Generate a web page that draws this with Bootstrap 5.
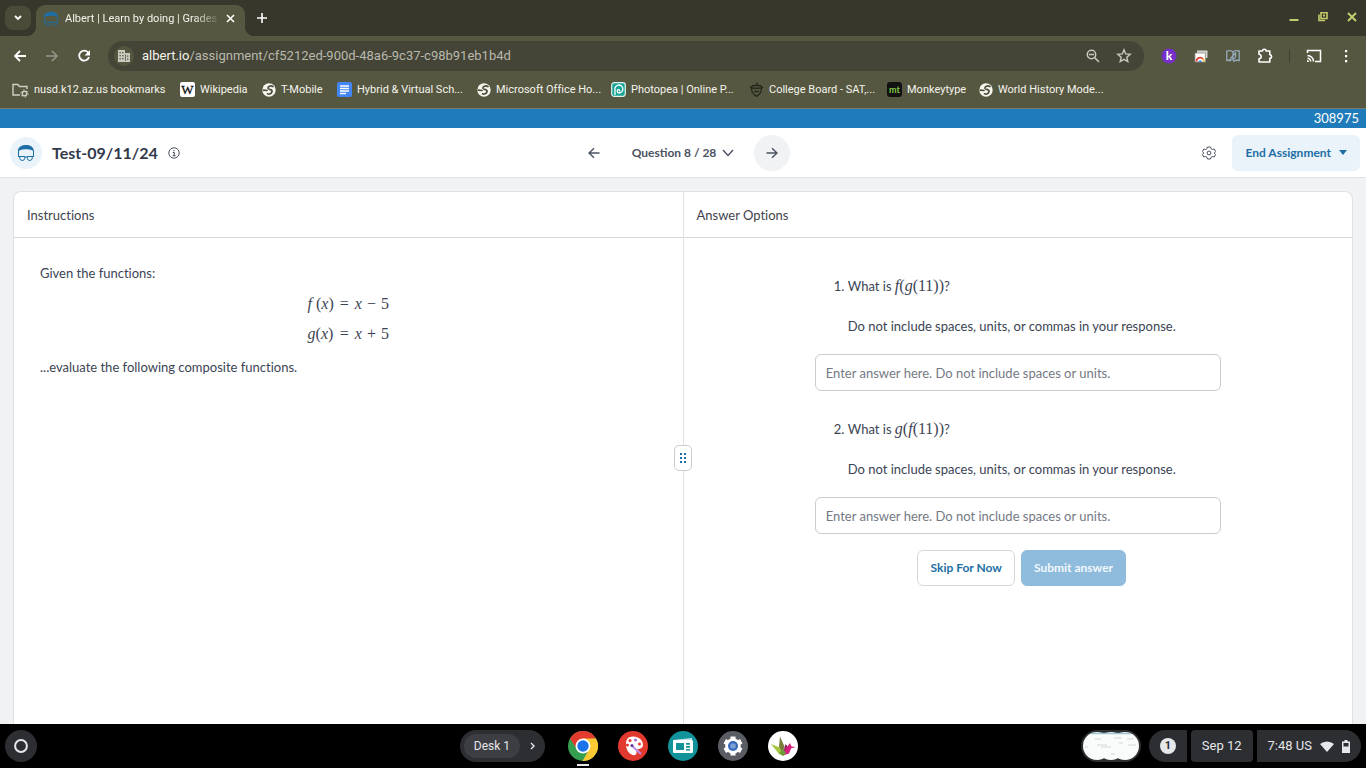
<!DOCTYPE html>
<html lang="en">
<head>
<meta charset="utf-8">
<meta name="viewport" content="width=device-width, initial-scale=1">
<title>Albert | Learn by doing</title>
<link href="https://cdn.jsdelivr.net/npm/bootstrap@5.3.0/dist/css/bootstrap.min.css" rel="stylesheet">
<style>
:root{--frame:#38372b;--tool:#565741;--omni:#444437;--ink:#3c4454;--brand:#1d6fa5;--line:#d5d7da}
body{font-family:Lato,"Liberation Sans",sans-serif;font-size:13px;line-height:20px;font-variant-ligatures:none;color:var(--ink);background:#f1f2f4}
svg{display:block;flex:none}
button{border:0;background:none;padding:0;color:inherit}
.chrome{font-family:Roboto,"Liberation Sans",sans-serif;background:var(--tool);color:#f4f4ec;border-bottom:1px solid #777d6d}
.tabstrip{height:36px;background:var(--frame);padding-left:5px}
.tabsearch{width:26px;height:24px;border-radius:8px;background:#4b4b39}
.browsertab{position:relative;width:209px;height:31px;margin-left:5px;margin-right:11px;padding:0 10px 4px 7px;border-radius:9px 9px 0 0;background:var(--tool);font-size:11px}
.browsertab::before,.browsertab::after{content:"";position:absolute;bottom:0;width:9px;height:9px}
.browsertab::before{left:-9px;background:radial-gradient(circle at 0 0,transparent 9px,var(--tool) 9px)}
.browsertab::after{right:-9px;background:radial-gradient(circle at 100% 0,transparent 9px,var(--tool) 9px)}
.tabtitle{margin-left:6px;-webkit-mask-image:linear-gradient(90deg,#000 85%,rgba(0,0,0,.15))}
.winctl{color:#c3cd6b;gap:17px;padding-right:8px}
.toolbar{height:40px;padding:0 12px}
.tools{gap:16px}
.divider{width:1px;height:14px;background:#3f4031}
.omni{height:30px;border-radius:15px;background:var(--omni);padding:0 12px 0 6px;margin:0 17px 0 16px;font-size:13px}
.siteinfo{width:20px;height:20px;border-radius:50%;background:#55563f}
.urlrest{color:#b9b9ad}
.marks{display:grid;grid-template-columns:168px 82px 75px 140px 134px 138px 138px 92px 160px;height:32px;padding:0 12px 5px;font-size:11px}
.marks a{color:inherit;text-decoration:none;gap:5px;white-space:nowrap}
.idbar{height:19px;line-height:19px;background:#1f7bb9;color:#fff;font-size:13px;padding-right:7px}
.apphead{height:50px;background:#fff;border-bottom:1px solid #dfe1e4;display:grid;grid-template-columns:1fr auto 1fr;padding:0 6px}
.logo{width:32px;height:32px;border-radius:50%;background:#e9f3f9}
.testname{font-size:16px;line-height:24px;font-weight:700;color:#33394b;margin:0 10px}
.roundbtn{width:36px;height:36px;border-radius:50%}
.roundbtn.lit{background:#f1f2f4}
.counter{font-size:12px;font-weight:700;gap:6px;color:#4b5262}
.stepper{gap:20px}
.endbtn{height:36px;border-radius:6px;background:#e9f3f9;color:var(--brand);font-size:12px;font-weight:700;padding:0 13px}
.stage{background:#f1f2f4;padding:13px 13px 0}
.panes{position:relative;background:#fff;border:1px solid #dfe1e4;border-bottom:0;border-radius:8px 8px 0 0}
.pane{flex:1 1 0}
.pane + .pane{border-left:1px solid #dfe1e4}
.panehead{height:46px;padding:0 13px;border-bottom:1px solid var(--line);color:#3f434c}
.grip{position:absolute;left:50%;top:266px;transform:translate(-50%,-50%);width:18px;height:26px;border:1px solid #c9ccd1;border-radius:5px;background:#fff}
.prompt{padding:25px 26px 0}
.eqn,.tex{font-family:"Liberation Serif",serif;font-size:16px}
.tex{line-height:1}
.eqn{line-height:30px;margin-top:6px}
.eqn td{padding:0}
.rel{margin:0 6px}
.bin{margin:0 5px}
.answers{padding-top:14px}
.ask{width:406px;max-width:100%}
.ask ol{padding-left:33px;margin:0}
.ask li{line-height:20px}
.ask li p{margin:20px 0 18px}
.answer{height:37px;padding:0 10px;font-size:13px;color:var(--ink);border-color:#c9ccd1;border-radius:6px}
.answer::placeholder{color:#747984;opacity:1}
.act{height:36px;border-radius:6px;font-size:12px;font-weight:700;padding:0 12px;border:1px solid var(--line);color:var(--brand);background:#fff}
.act:disabled{background:#8fbcdc;border-color:#8fbcdc;color:#f2f8fc;opacity:1}
.actions{gap:6px}
.shelf{height:44px;background:#000;color:#e6e7ea;font-family:Roboto,"Liberation Sans",sans-serif;display:grid;grid-template-columns:1fr auto 1fr;padding:0 5px}
.pill{height:32px;background:#2d2e32;padding:0 11px}
.launcher{width:32px;height:32px;border-radius:50%;background:#2d2e32}
.desks{height:32px;border-radius:16px;background:#2d2e32;padding:0 4px;gap:5px;margin-right:23px;font-size:12px}
.deskname{height:24px;border-radius:12px;background:#3d3e43;padding:0 10px}
.apps{gap:20px}
.running{position:relative}
.running::after{content:"";position:absolute;left:9px;right:9px;bottom:-5px;height:2px;background:#e6e7ea}
.tray{gap:4px}
.clock{gap:8px}
.tally{width:16px;height:16px;border-radius:50%;background:#e6e7ea;color:#2d2e32;font-size:11px;line-height:16px;font-weight:700}
</style>
</head>
<body class="vh-100 d-flex flex-column overflow-hidden">
<svg width="0" height="0" class="position-absolute" aria-hidden="true">
<symbol id="albert" viewBox="0 0 18 18"><path fill="#1d6fa5" d="M1 7.500C.5 4 4 1 8 1c5-.6 9 2 9 6.500l-2-1.300C12 5 6 5 3 6.200z"/><path fill="none" stroke="#1d6fa5" d="M1.500 7v6M16.500 7v6M1.500 12.500h6.200v2q-.3 2-2.500 2-2 0-2.400-2v-2M16.500 12.500h-6.200v2q.3 2 2.500 2 2 0 2.400-2v-2M7.700 13h2.600"/></symbol>
<symbol id="globe" viewBox="0 0 14 14"><circle cx="7" cy="7" r="6.700" fill="#f7f7f0"/><path fill="none" stroke="#4c4d39" stroke-width="1.700" stroke-linecap="round" d="M11 3.600C8.500 2 5.500 3.500 6 5.500c.5 1.200 4.500.5 4 3-.4 2-2.500 3-4.500 2.300M1.500 7.200l3.500.3"/></symbol>
</svg>

<header class="chrome">
 <div class="tabstrip d-flex align-items-center">
  <button class="tabsearch d-flex align-items-center justify-content-center" aria-label="Search tabs"><svg width="8" height="6" viewBox="0 0 8 6"><path d="M1 1l3 3 3-3" fill="none" stroke="#fff" stroke-width="1.800"/></svg></button>
  <div class="browsertab d-flex align-items-center align-self-end">
   <svg width="16" height="16"><use href="#albert"/></svg>
   <span class="tabtitle text-nowrap">Albert | Learn by doing | Grades</span>
   <button class="ms-auto" aria-label="Close tab"><svg width="9" height="9" viewBox="0 0 9 9"><path d="M1 1l7 7M8 1L1 8" stroke="#fff" stroke-width="1.600"/></svg></button>
  </div>
  <button aria-label="New tab"><svg width="12" height="12" viewBox="0 0 12 12"><path d="M6 1v10M1 6h10" stroke="#fff" stroke-width="1.600"/></svg></button>
  <div class="winctl ms-auto d-flex align-items-center">
   <button aria-label="Minimize"><svg width="12" height="12" viewBox="0 0 12 12"><path d="M1.500 8h9" stroke="currentColor" stroke-width="2"/></svg></button>
   <button aria-label="Restore"><svg width="12" height="12" viewBox="0 0 12 12"><path d="M4 .8h6V6.500H4zM2 2.500v6h6" fill="none" stroke="currentColor" stroke-width="1.600"/><path d="M6 2.500h2v2H6z" fill="currentColor"/></svg></button>
   <button aria-label="Close"><svg width="12" height="12" viewBox="0 0 12 12"><path d="M2 1l8 8M10 1l-8 8" stroke="currentColor" stroke-width="2"/></svg></button>
  </div>
 </div>
 <div class="toolbar d-flex align-items-center">
  <div class="tools d-flex">
   <button aria-label="Back"><svg width="16" height="16" viewBox="0 0 16 16"><path d="M14 8H3m5-5L3 8l5 5" fill="none" stroke="#fff" stroke-width="1.800"/></svg></button>
   <button aria-label="Forward"><svg width="16" height="16" viewBox="0 0 16 16"><path d="M2 8h11M8 3l5 5-5 5" fill="none" stroke="#96978a" stroke-width="1.600"/></svg></button>
   <button aria-label="Reload"><svg width="16" height="16" viewBox="0 0 16 16"><path d="M12.500 5A5 5 0 1 0 13 9" fill="none" stroke="#fff" stroke-width="1.800"/><path d="M14 2v5.500H8.500z" fill="#fff"/></svg></button>
  </div>
  <div class="omni d-flex align-items-center flex-grow-1">
   <span class="siteinfo d-flex align-items-center justify-content-center me-2"><svg width="14" height="14" viewBox="0 0 14 14"><path fill="#c9c9bd" d="M1 1h7v3h5v9H1z"/><path fill="#55563f" d="M2.500 3h1.300v1.300H2.500zM5.200 3h1.300v1.300H5.200zM2.500 6h1.300v1.300H2.500zM5.200 6h1.300v1.300H5.200zM2.500 9h1.300v1.300H2.500zM5.200 9h1.300v1.300H5.200zM8 5.500h.8V12H8zM10 6.500h1.300v1.300H10zM10 9.500h1.300v1.300H10z"/></svg></span>
   <span class="text-nowrap">albert.io<span class="urlrest">/assignment/cf5212ed-900d-48a6-9c37-c98b91eb1b4d</span></span>
   <button class="ms-auto me-3" aria-label="Zoom"><svg width="14" height="14" viewBox="0 0 14 14"><path d="M8.500 8.500L13 13M3 5.500h5" stroke="#c9c9bd" stroke-width="1.600"/><circle cx="5.500" cy="5.500" r="4.200" fill="none" stroke="#c9c9bd" stroke-width="1.500"/></svg></button>
   <button aria-label="Bookmark this page"><svg width="16" height="16" viewBox="0 0 16 16"><path d="M8 1.800l1.700 4.100 4.500.4-3.400 2.900 1 4.400L8 11.300l-3.800 2.300 1-4.400-3.400-2.900 4.500-.4z" fill="none" stroke="#c9c9bd" stroke-width="1.400"/></svg></button>
  </div>
  <div class="tools d-flex align-items-center">
   <svg width="16" height="16" viewBox="0 0 16 16"><circle cx="8" cy="8" r="7.500" fill="#7430c8"/><text x="8" y="12" text-anchor="middle" font-family="Lato,sans-serif" font-size="12" font-weight="900" fill="#fff">k</text></svg>
   <svg width="16" height="16" viewBox="0 0 16 16"><path fill="#d4d4cf" d="M4 2.500h10.500V10H4z"/><path fill="#fff" stroke="#8b8c83" stroke-width=".8" d="M2 5h10.500v9H2z"/><path fill="none" stroke="#e04436" stroke-width="1.800" d="M3.500 13.500a3.700 3.700 0 0 1 6.500-2.500"/><path fill="none" stroke="#f5b92c" stroke-width="1.800" d="M10 11q1 1 1 2.500"/><path fill="#4285f4" d="M5.500 14a1.700 1.700 0 0 1 3.400 0z"/></svg>
   <svg width="16" height="16" viewBox="0 0 16 16"><path fill="none" stroke="#93abbb" stroke-width="1.300" d="M8 12.500V4C6.500 2.500 4 2.300 1.800 3v9.500c2-.5 3-.5 4.200 0M8 4c1-1.500 3-1.700 6.200-1v9.500c-2.500-.6-4-.3-6 1M4.500 13.500C4.500 9 8 8.500 10.500 5c1 4-1 7-5 7"/></svg>
   <svg width="16" height="16" viewBox="0 0 16 16"><path fill="none" stroke="#fff" stroke-width="1.600" stroke-linejoin="round" d="M2 3h3.500a1.800 1.800 0 0 1 3.600 0h3.700v3.700a1.800 1.800 0 0 1 0 3.600V14H2v-3.300a2.200 2.200 0 0 0 0-4.400z"/></svg>
   <span class="divider"></span>
   <svg width="16" height="16" viewBox="0 0 16 16"><path d="M1.500 5V2.500h13v11H9M1.500 7.500a6 6 0 0 1 6 6M1.500 10.300a3.200 3.200 0 0 1 3.200 3.200" fill="none" stroke="#fff" stroke-width="1.500"/><path d="M1 12a2 2 0 0 1 2 2H1z" fill="#fff"/></svg>
   <svg width="16" height="16" viewBox="0 0 16 16" fill="#fff"><path d="M7 2h2.200v2.200H7zM7 7h2.200v2.200H7zM7 12h2.200v2.200H7z"/></svg>
  </div>
 </div>
 <nav class="marks">
  <a href="#" class="d-flex align-items-center"><svg width="17" height="16" viewBox="0 0 17 16"><path d="M8 13H1V2.500h5l1.500 2H15V7" fill="none" stroke="#cfcfc4" stroke-width="1.400"/><circle cx="12.500" cy="11.500" r="2.300" fill="none" stroke="#cfcfc4" stroke-width="1.400"/><circle cx="12.500" cy="11.500" r="3.600" fill="none" stroke="#cfcfc4" stroke-dasharray="1.500 2.270"/></svg>nusd.k12.az.us bookmarks</a>
  <a href="#" class="d-flex align-items-center"><svg width="15" height="15" viewBox="0 0 15 15"><rect width="15" height="15" rx="2" fill="#fff"/><text x="7.500" y="12" text-anchor="middle" font-family="Liberation Serif,serif" font-size="13" fill="#111" stroke="#111" stroke-width=".3">W</text></svg>Wikipedia</a>
  <a href="#" class="d-flex align-items-center"><svg width="14" height="14"><use href="#globe"/></svg>T-Mobile</a>
  <a href="#" class="d-flex align-items-center"><svg width="15" height="15" viewBox="0 0 15 15"><rect width="15" height="15" rx="2" fill="#4285f4"/><path d="M3 4h9M3 6.500h9M3 9h9M3 11.500h6" stroke="#fff" stroke-width="1.300"/></svg>Hybrid &amp; Virtual Sch...</a>
  <a href="#" class="d-flex align-items-center"><svg width="14" height="14"><use href="#globe"/></svg>Microsoft Office Ho...</a>
  <a href="#" class="d-flex align-items-center"><svg width="15" height="15" viewBox="0 0 15 15"><rect x=".7" y=".7" width="13.600" height="13.600" rx="2.500" fill="#18a497" stroke="#e5f3ee" stroke-width="1.200"/><path d="M4 13V8a4 4 0 1 1 4 3c-2 0-2.500-3-.5-3.300 1.200 0 1.500 1.300.7 1.500" fill="none" stroke="#fff" stroke-width="1.300"/></svg>Photopea | Online P...</a>
  <a href="#" class="d-flex align-items-center"><svg width="15" height="15" viewBox="0 0 15 15"><path d="M1.500 5.500c2.500-3 9.500-3 12 0-1.500 1-10.500 1-12 0zm1 .8c0 4 2 6.500 5 8 3-1.500 5-4 5-8M7.500 3L8.500.5M5 9.500h5" fill="none" stroke="#25271d" stroke-width="1.300"/></svg>College Board - SAT,...</a>
  <a href="#" class="d-flex align-items-center"><svg width="15" height="15" viewBox="0 0 15 15"><rect width="15" height="15" rx="3" fill="#111"/><text x="7.500" y="11" text-anchor="middle" font-family="Lato,sans-serif" font-size="9" font-weight="700" fill="#83c846">mt</text></svg>Monkeytype</a>
  <a href="#" class="d-flex align-items-center"><svg width="14" height="14"><use href="#globe"/></svg>World History Mode...</a>
 </nav>
</header>

<div class="idbar text-end">308975</div>

<header class="apphead align-items-center">
 <div class="d-flex align-items-center ps-1">
  <span class="logo d-flex align-items-center justify-content-center"><svg width="18" height="18"><use href="#albert"/></svg></span>
  <h1 class="testname">Test-09/11/24</h1>
  <button aria-label="Details"><svg width="12" height="12" viewBox="0 0 12 12"><circle cx="6" cy="6" r="5.200" fill="none" stroke="#4b5262"/><path d="M4.800 5.500H6.200V8.700M4.600 8.700h3M6 3v1.300" fill="none" stroke="#4b5262" stroke-width="1.100"/></svg></button>
 </div>
 <div class="stepper d-flex align-items-center">
  <button class="roundbtn d-flex align-items-center justify-content-center" aria-label="Previous question"><svg width="12" height="12" viewBox="0 0 12 12"><path d="M11.500 6H1m5-4.800L1 6l5 4.800" fill="none" stroke="#4b5262" stroke-width="1.400"/></svg></button>
  <button class="counter d-flex align-items-center">Question 8 / 28<svg width="12" height="8" viewBox="0 0 12 8"><path d="M1 1l5 5.500L11 1" fill="none" stroke="#4b5262" stroke-width="1.400"/></svg></button>
  <button class="roundbtn lit d-flex align-items-center justify-content-center" aria-label="Next question"><svg width="12" height="12" viewBox="0 0 12 12"><path d="M.5 6H11M6 1.200L11 6l-5 4.800" fill="none" stroke="#4b5262" stroke-width="1.400"/></svg></button>
 </div>
 <div class="d-flex align-items-center justify-content-end gap-3">
  <button aria-label="Settings"><svg width="14" height="14" viewBox="0 0 14 14"><path d="M5.500 1h3l.5 1.700 1.500.8 1.700-.5 1.400 2.500L12.300 7l1.300 1.500-1.400 2.500-1.700-.5-1.500.8-.5 1.700h-3L5 11.300l-1.500-.8-1.700.5L.4 8.500 1.700 7 .4 5.500 1.800 3l1.700.5L5 2.700z" fill="none" stroke="#4b5262" stroke-linejoin="round"/><circle cx="7" cy="7" r="1.900" fill="none" stroke="#4b5262"/></svg></button>
  <button class="endbtn d-flex align-items-center">End Assignment<svg class="ms-2" width="8" height="5" viewBox="0 0 8 5"><path d="M0 0h8L4 5z" fill="currentColor"/></svg></button>
 </div>
</header>

<main class="stage flex-grow-1 d-flex">
 <div class="panes d-flex flex-grow-1">
  <section class="pane">
   <div class="panehead d-flex align-items-center">Instructions</div>
   <div class="prompt">
    <p class="mb-0">Given the functions:</p>
    <table class="eqn mx-auto"><tbody>
     <tr><td><i>f</i> (<i>x</i>)</td><td><span class="rel">=</span><i>x</i><span class="bin">−</span>5</td></tr>
     <tr><td><i>g</i>(<i>x</i>)</td><td><span class="rel">=</span><i>x</i><span class="bin">+</span>5</td></tr>
    </tbody></table>
    <p class="mt-2 mb-0">...evaluate the following composite functions.</p>
   </div>
  </section>
  <section class="pane">
   <div class="panehead d-flex align-items-center">Answer Options</div>
   <form class="answers d-flex flex-column align-items-center">
    <div class="ask pt-4">
     <ol><li>What is <span class="tex"><i>f</i>(<i>g</i>(11))</span>?<p id="q1">Do not include spaces, units, or commas in your response.</p></li></ol>
     <input class="form-control answer" type="text" aria-labelledby="q1" placeholder="Enter answer here. Do not include spaces or units.">
    </div>
    <div class="ask pt-4 mt-1">
     <ol start="2"><li>What is <span class="tex"><i>g</i>(<i>f</i>(11))</span>?<p id="q2">Do not include spaces, units, or commas in your response.</p></li></ol>
     <input class="form-control answer" type="text" aria-labelledby="q2" placeholder="Enter answer here. Do not include spaces or units.">
    </div>
    <div class="actions d-flex mt-3 ps-2">
     <button type="button" class="act">Skip For Now</button>
     <button type="submit" class="act" disabled>Submit answer</button>
    </div>
   </form>
  </section>
  <button class="grip d-flex align-items-center justify-content-center" aria-label="Resize panes"><svg width="8" height="12" viewBox="0 0 8 12" fill="#1d6fa5"><path d="M1 1h2v2H1zM5 1h2v2H5zM1 5h2v2H1zM5 5h2v2H5zM1 9h2v2H1zM5 9h2v2H5z"/></svg></button>
 </div>
</main>

<footer class="shelf align-items-center">
 <div class="d-flex align-items-center justify-content-between">
  <button class="launcher d-flex align-items-center justify-content-center" aria-label="Launcher"><svg width="14" height="14" viewBox="0 0 14 14"><circle cx="7" cy="7" r="5.900" fill="none" stroke="#e6e7ea" stroke-width="2"/></svg></button>
  <div class="desks d-flex align-items-center"><button class="deskname">Desk 1</button><button aria-label="Next desk" class="px-1"><svg width="8" height="8" viewBox="0 0 8 8"><path d="M2 1l3 3-3 3" fill="none" stroke="#e6e7ea" stroke-width="1.400"/></svg></button></div>
 </div>
 <div class="apps d-flex align-items-center">
  <button class="running" aria-label="Chrome"><svg width="30" height="30" viewBox="0 0 30 30"><circle cx="15" cy="15" r="15" fill="#34a04f"/><path d="M2 7.500A15 15 0 0 1 28 7.500L15 8.500 9 18.500z" fill="#e33b2e"/><path d="M28 7.500A15 15 0 0 1 14.500 30L22 17 15 7.500z" fill="#fbc934"/><circle cx="15" cy="15" r="7.500" fill="#fff"/><circle cx="15" cy="15" r="5.700" fill="#1a73e8"/></svg></button>
  <button aria-label="Canvas"><svg width="30" height="30" viewBox="0 0 30 30"><circle cx="15" cy="15" r="15" fill="#e2392f"/><path d="M15 5.500c6 0 10 4 10 8.500 0 4-5 4-6 4.500-1 1-.5 2.500-.5 3.500 0 3-5 3-8-1S5.500 5.500 15 5.500z" fill="#fff"/><path d="M13 14l10 9" stroke="#c18be8" stroke-width="2"/><circle cx="14" cy="14.500" r="1.500" fill="#5c3b99"/><g fill="#e2392f"><circle cx="9.500" cy="14" r="1.500"/><circle cx="12" cy="9.500" r="1.500"/><circle cx="17.500" cy="9" r="1.500" fill="#a667d8"/><circle cx="21.500" cy="13" r="1.500"/></g></svg></button>
  <button aria-label="Screencast"><svg width="30" height="30" viewBox="0 0 30 30"><circle cx="15" cy="15" r="15" fill="#12929a"/><path d="M5 9l19-2v13L6 22z" fill="#b9e5e8"/><rect x="5" y="9" width="20" height="13" rx="1.500" fill="#fff"/><path d="M8 12h8v7H8zM18 12h4v1.800h-4zM18 15h4v1.800h-4zM18 18h4v1.500h-4z" fill="#12929a"/></svg></button>
  <button aria-label="Settings"><svg width="30" height="30" viewBox="0 0 30 30"><circle cx="15" cy="15" r="15" fill="#5a5d63"/><g fill="#fff"><circle cx="15" cy="15" r="7.800"/><path id="tooth" d="M12.500 5.500h5V10h-5zM12.500 20h5v4.500h-5z"/><use href="#tooth" transform="rotate(60 15 15)"/><use href="#tooth" transform="rotate(120 15 15)"/></g><circle cx="15" cy="15" r="5" fill="#3468b8"/><circle cx="15" cy="15" r="2.800" fill="#7d9fd6"/></svg></button>
  <button aria-label="Paper crane"><svg width="30" height="30" viewBox="0 0 30 30"><circle cx="15" cy="15" r="15" fill="#fff"/><path d="M3 13l10 4 3 8-5-2z" fill="#a6c63f"/><path d="M12 5.500l4.500 10-2 7-3.500-7z" fill="#7a7d3c"/><path d="M15 22l2.500-9 3.500 4-2 6z" fill="#8d2157"/><path d="M16 20l6-8 1.500 3.500 4 .5-4.500 1.500-2 5-6 2z" fill="#d61f7d"/><path d="M11 22l4-4 3 4-3 3z" fill="#6d9a3a"/></svg></button>
 </div>
 <div class="tray d-flex align-items-center justify-content-end">
  <svg class="me-1" width="60" height="32" viewBox="0 0 60 32"><rect width="60" height="32" rx="16" fill="#2d2e32"/><g fill="#fafbfb"><circle cx="16" cy="16" r="14"/><circle cx="30" cy="16" r="14"/><circle cx="44" cy="16" r="14"/><path d="M16 3h28v24H16z"/></g><path d="M10 3.500h40" stroke="#9fc6cf" stroke-width="1.500"/><path d="M14 9h6M16 15h10M20 17h10M33 8h8M38 13h4M46 9h6M47 15h8M4 17h3M30 24h4" stroke="#d3d6d8"/></svg>
  <span class="pill d-flex align-items-center rounded-start-pill rounded-end-1"><span class="tally text-center">1</span></span>
  <span class="pill d-flex align-items-center rounded-1">Sep 12</span>
  <span class="pill clock d-flex align-items-center rounded-start-1 rounded-end-pill"><span>7:48 US</span><svg width="14" height="11" viewBox="0 0 14 11"><path d="M0 3a11 11 0 0 1 14 0L7 11z" fill="#e6e7ea"/></svg><svg width="8" height="13" viewBox="0 0 8 13"><path d="M2.500 0h3v1.500H8V13H0V1.500h2.500z" fill="#e6e7ea"/><path d="M1.500 3h5v3.500h-5z" fill="#2d2e32"/></svg></span>
 </div>
</footer>
<script src="https://cdn.jsdelivr.net/npm/bootstrap@5.3.0/dist/js/bootstrap.bundle.min.js"></script>
</body>
</html>
